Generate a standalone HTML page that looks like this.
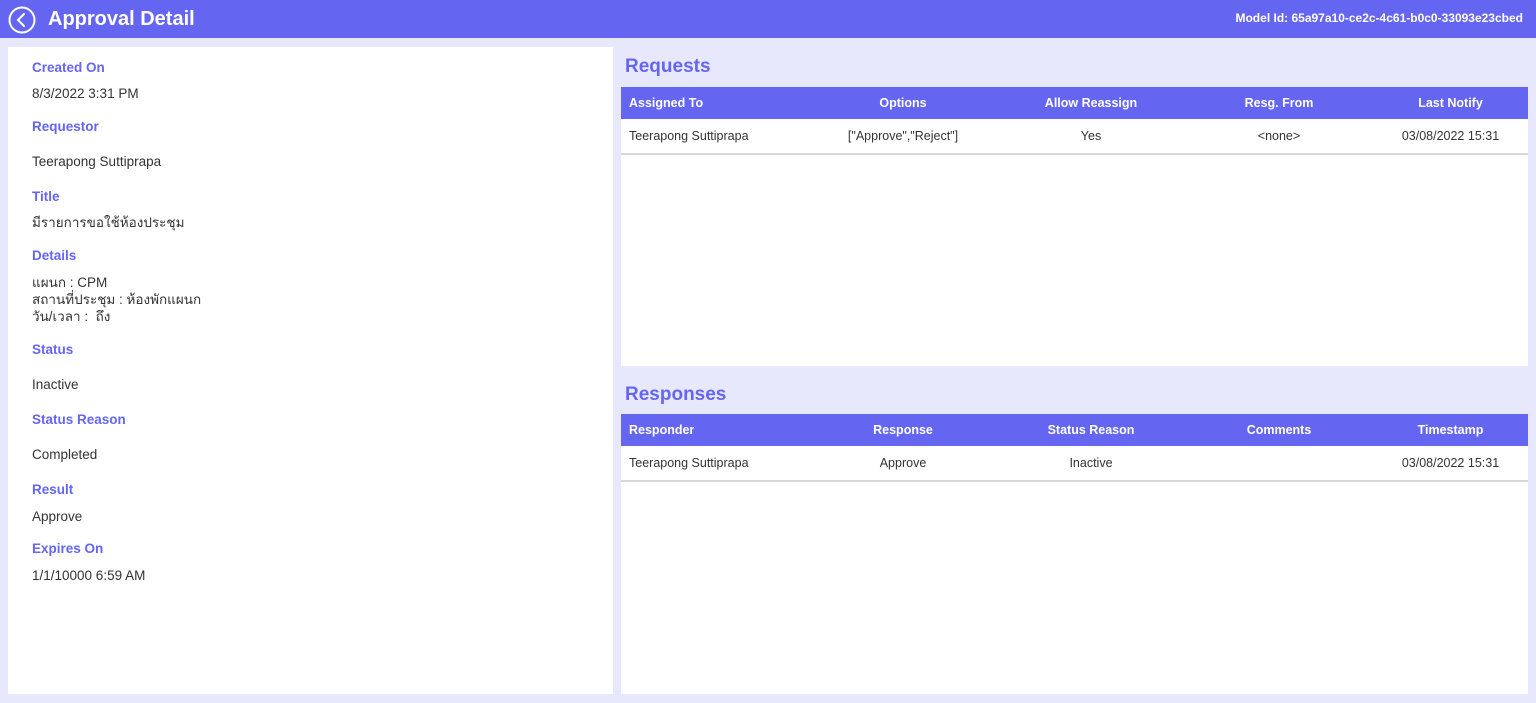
<!DOCTYPE html>
<html><head><meta charset="utf-8"><style>
*{margin:0;padding:0;box-sizing:border-box}
body{width:1536px;height:703px;background:#E8E8FC;font-family:"Segoe UI","Liberation Sans","Noto Sans CJK SC",sans-serif;color:#333;position:relative;overflow:hidden;font-size:13px}
.hdr{position:absolute;left:0;top:0;width:1536px;height:38px;background:#6466F1;color:#fff}
.hdr .t{position:absolute;left:48px;top:8px;font-size:20px;font-weight:bold}
.hdr .m{position:absolute;right:13px;top:11px;font-size:12px;font-weight:bold}
.left{position:absolute;left:8px;top:47px;width:605px;height:647px;background:#fff}
.lab{position:absolute;left:24px;color:#6466F1;font-weight:bold;font-size:13.5px}
.val{position:absolute;left:24px;font-size:13.5px;line-height:17px}
.sec{position:absolute;left:625px;color:#6466F1;font-weight:bold;font-size:19px}
.tbl{position:absolute;left:621px;width:907px;background:#fff}
.th{height:32px;background:#6466F1;color:#fff;font-weight:bold;font-size:12.5px;display:flex;align-items:center}
.tr{height:36px;border-bottom:2px solid #d8d8d8;display:flex;align-items:center;font-size:12.5px}
.c{width:188px;text-align:center}.c:first-child{text-align:left;padding-left:8px}
.c:last-child{width:155px}
</style></head><body>
<div class="hdr"><svg style="position:absolute;left:8px;top:6px" width="28" height="28" viewBox="0 0 28 28"><circle cx="14" cy="14" r="12.5" fill="none" stroke="#fff" stroke-width="2"/><path d="M16 8l-6 6 6 6" fill="none" stroke="#fff" stroke-width="2" stroke-linecap="round"/></svg><div class="t">Approval Detail</div><div class="m">Model Id: 65a97a10-ce2c-4c61-b0c0-33093e23cbed</div></div>
<div class="left">
<div class="lab" style="top:13px">Created On</div><div class="val" style="top:38px">8/3/2022 3:31 PM</div>
<div class="lab" style="top:72px">Requestor</div><div class="val" style="top:106px">Teerapong Suttiprapa</div>
<div class="lab" style="top:142px">Title</div><div class="val" style="top:167px">มีรายการขอใช้ห้องประชุม</div>
<div class="lab" style="top:201px">Details</div><div class="val" style="top:227px">แผนก : CPM<br>สถานที่ประชุม : ห้องพักแผนก<br>วัน/เวลา :&nbsp; ถึง</div>
<div class="lab" style="top:295px">Status</div><div class="val" style="top:329px">Inactive</div>
<div class="lab" style="top:365px">Status Reason</div><div class="val" style="top:399px">Completed</div>
<div class="lab" style="top:435px">Result</div><div class="val" style="top:461px">Approve</div>
<div class="lab" style="top:494px">Expires On</div><div class="val" style="top:520px">1/1/10000 6:59 AM</div>
</div>
<div class="sec" style="top:56px">Requests</div>
<div class="tbl" style="top:87px;height:279px">
<div class="th"><div class="c">Assigned To</div><div class="c">Options</div><div class="c">Allow Reassign</div><div class="c">Resg. From</div><div class="c">Last Notify</div></div>
<div class="tr"><div class="c">Teerapong Suttiprapa</div><div class="c">["Approve","Reject"]</div><div class="c">Yes</div><div class="c">&lt;none&gt;</div><div class="c">03/08/2022 15:31</div></div>
</div>
<div class="sec" style="top:384px">Responses</div>
<div class="tbl" style="top:414px;height:280px">
<div class="th"><div class="c">Responder</div><div class="c">Response</div><div class="c">Status Reason</div><div class="c">Comments</div><div class="c">Timestamp</div></div>
<div class="tr"><div class="c">Teerapong Suttiprapa</div><div class="c">Approve</div><div class="c">Inactive</div><div class="c"></div><div class="c">03/08/2022 15:31</div></div>
</div>
</body></html>
